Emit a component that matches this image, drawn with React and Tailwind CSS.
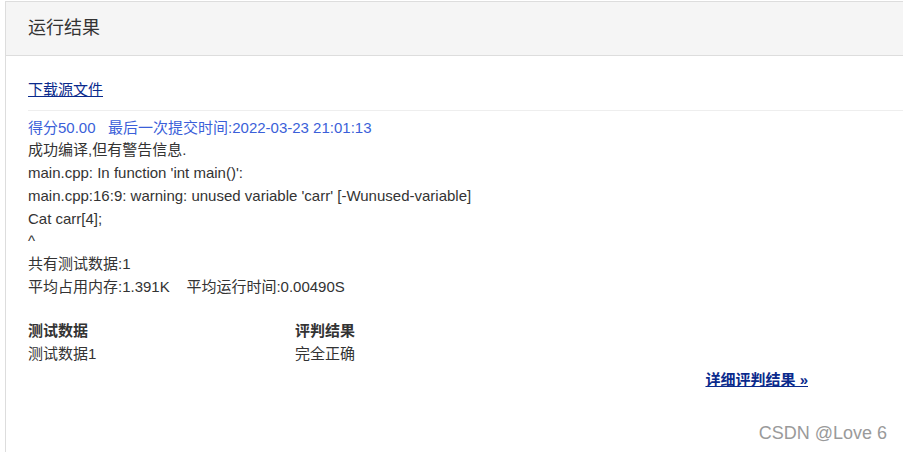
export default function App() {
  return (
    <div
      className="relative w-[903px] h-[452px] bg-white overflow-hidden pt-px pl-[5px]"
      style={{ fontFamily: '"Liberation Sans", Arial, "Noto Sans CJK SC", sans-serif' }}
    >
      <div className="h-full border-l border-t border-[#dddddd] bg-white">
        <div className="h-[54px] bg-[#f5f5f5] border-b border-[#dddddd] pl-[22px] flex items-center">
          <h3 className="text-[18px] text-[#333333] font-normal">运行结果</h3>
        </div>

        <div className="pl-[22px] pt-[23px] text-[15px] text-[#333333] leading-[22.7px]">
          <a href="#" className="text-[#0a2a8c] underline">
            下载源文件
          </a>
          <div className="mt-[8px] mb-[6px] border-t border-[#eeeeee]" />

          <div className="text-[#3b5fd9] whitespace-pre">得分50.00   最后一次提交时间:2022-03-23 21:01:13</div>
          <div>成功编译,但有警告信息.</div>
          <div>main.cpp: In function 'int main()':</div>
          <div>main.cpp:16:9: warning: unused variable 'carr' [-Wunused-variable]</div>
          <div>Cat carr[4];</div>
          <div>^</div>
          <div>共有测试数据:1</div>
          <div className="whitespace-pre">平均占用内存:1.391K    平均运行时间:0.00490S</div>

          <div className="mt-[22px] grid grid-cols-[267px_1fr]">
            <div className="font-bold">测试数据</div>
            <div className="font-bold">评判结果</div>
            <div>测试数据1</div>
            <div>完全正确</div>
          </div>

          <div className="mt-[3px] w-[780px] flex justify-end">
            <a href="#" className="text-[#0a2a8c] font-bold underline">
              详细评判结果 »
            </a>
          </div>
        </div>
      </div>

      <div className="absolute right-[16px] bottom-[5px] text-[18px] text-[#9a9a9a] [text-shadow:0_0_1px_#ffffff]">
        CSDN @Love 6
      </div>
    </div>
  );
}
